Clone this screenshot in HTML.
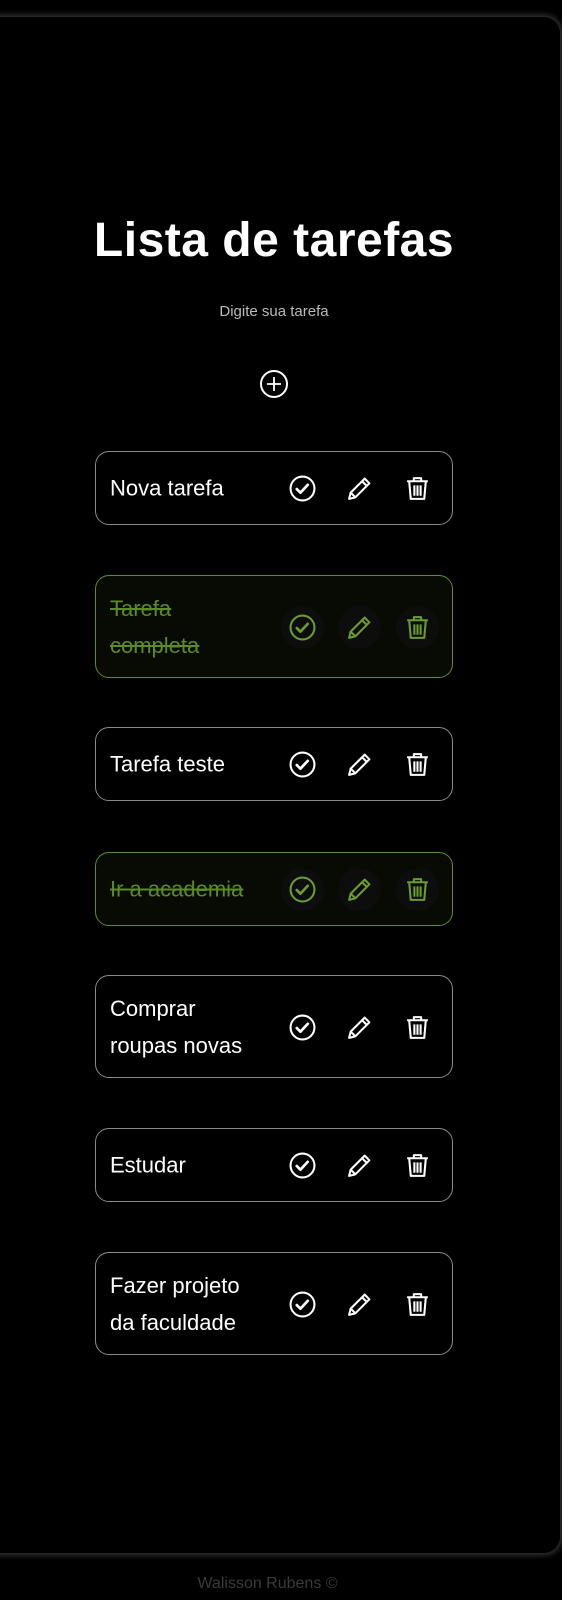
<!DOCTYPE html>
<html><head><meta charset="utf-8"><style>
*{margin:0;padding:0;box-sizing:border-box}
html,body{width:562px;height:1600px;background:#000;overflow:hidden;font-family:"Liberation Sans",sans-serif}
.main{position:absolute;left:-20px;top:17px;width:580px;height:1536px;background:#000;border-radius:16px;box-shadow:0 0 6px 2px rgba(90,90,90,.6)}
h1{position:absolute;top:213px;left:0;width:548px;text-align:center;color:#fff;font-size:48px;font-weight:bold;letter-spacing:0.5px}
.sub{position:absolute;top:303px;left:0;width:548px;text-align:center;color:#bbb;font-size:15px}
.plus{position:absolute;left:259px;top:369px}
.card{position:absolute;left:95px;width:358px;border:1px solid #8a8a8a;border-radius:14px;background:#000}
.card.done{border-color:#5e8d2b;background:#070b03}
.t{position:absolute;left:14px;top:50%;transform:translateY(-50%);width:150px;color:#fff;font-size:22px;line-height:37px}
.done .t{color:#5b8a26;text-decoration:line-through}
.ic{position:absolute;top:50%;width:43px;height:43px;margin-top:-21px;border-radius:50%;display:flex;align-items:center;justify-content:center}
.done .ic{background:#0d0d0d}
.i1{left:185px}.i2{left:242px}.i3{left:300px}
</style></head><body>
<div class="main"></div>
<h1>Lista de tarefas</h1>
<div class="sub">Digite sua tarefa</div>
<svg class="plus" width="30" height="30" viewBox="0 0 30 30"><circle cx="15" cy="15" r="13" fill="none" stroke="#fff" stroke-width="2"/><path d="M15 8v14M8 15h14" stroke="#fff" stroke-width="1.8"/></svg>

<svg width="0" height="0" style="position:absolute">
<defs>
<symbol id="chk" viewBox="0 0 26 26"><circle cx="13" cy="13" r="11.5" fill="none" stroke="currentColor" stroke-width="2"/><path d="M7.5 13.5l3.5 3.5 7-7.5" fill="none" stroke="currentColor" stroke-width="2.6" stroke-linecap="round" stroke-linejoin="round"/></symbol>
<symbol id="pen" viewBox="0 0 26 26"><path d="M18 3.5l4.5 4.5L9 21.5 3 23l1.5-6z M15.5 6l4.5 4.5 M4.5 17l4.5 4.5" fill="none" stroke="currentColor" stroke-width="2" stroke-linejoin="round"/></symbol>
<symbol id="trs" viewBox="0 0 26 26"><path d="M3 6h20 M9.5 6V3h7v3 M5 6l1.5 17h13L21 6 M10 10v10 M13 10v10 M16 10v10" fill="none" stroke="currentColor" stroke-width="2" stroke-linejoin="round"/></symbol>
</defs></svg>

<div class="card" style="top:451px;height:74px"><div class="t">Nova tarefa</div>
<div class="ic i1"><svg width="27" height="27" color="#fff"><use href="#chk"/></svg></div><div class="ic i2"><svg width="27" height="27" color="#fff"><use href="#pen"/></svg></div><div class="ic i3"><svg width="27" height="27" color="#fff"><use href="#trs"/></svg></div></div>

<div class="card done" style="top:575px;height:103px"><div class="t">Tarefa completa</div>
<div class="ic i1"><svg width="27" height="27" color="#6a9c30"><use href="#chk"/></svg></div><div class="ic i2"><svg width="27" height="27" color="#6a9c30"><use href="#pen"/></svg></div><div class="ic i3"><svg width="27" height="27" color="#6a9c30"><use href="#trs"/></svg></div></div>

<div class="card" style="top:727px;height:74px"><div class="t">Tarefa teste</div>
<div class="ic i1"><svg width="27" height="27" color="#fff"><use href="#chk"/></svg></div><div class="ic i2"><svg width="27" height="27" color="#fff"><use href="#pen"/></svg></div><div class="ic i3"><svg width="27" height="27" color="#fff"><use href="#trs"/></svg></div></div>

<div class="card done" style="top:852px;height:74px"><div class="t" style="width:175px">Ir a academia</div>
<div class="ic i1"><svg width="27" height="27" color="#6a9c30"><use href="#chk"/></svg></div><div class="ic i2"><svg width="27" height="27" color="#6a9c30"><use href="#pen"/></svg></div><div class="ic i3"><svg width="27" height="27" color="#6a9c30"><use href="#trs"/></svg></div></div>

<div class="card" style="top:975px;height:103px"><div class="t">Comprar roupas novas</div>
<div class="ic i1"><svg width="27" height="27" color="#fff"><use href="#chk"/></svg></div><div class="ic i2"><svg width="27" height="27" color="#fff"><use href="#pen"/></svg></div><div class="ic i3"><svg width="27" height="27" color="#fff"><use href="#trs"/></svg></div></div>

<div class="card" style="top:1128px;height:74px"><div class="t">Estudar</div>
<div class="ic i1"><svg width="27" height="27" color="#fff"><use href="#chk"/></svg></div><div class="ic i2"><svg width="27" height="27" color="#fff"><use href="#pen"/></svg></div><div class="ic i3"><svg width="27" height="27" color="#fff"><use href="#trs"/></svg></div></div>

<div class="card" style="top:1252px;height:103px"><div class="t">Fazer projeto da faculdade</div>
<div class="ic i1"><svg width="27" height="27" color="#fff"><use href="#chk"/></svg></div><div class="ic i2"><svg width="27" height="27" color="#fff"><use href="#pen"/></svg></div><div class="ic i3"><svg width="27" height="27" color="#fff"><use href="#trs"/></svg></div></div>

<div style="position:absolute;top:1575px;left:0;width:535px;text-align:center;color:#3a3a3a;font-size:16px">Walisson Rubens ©</div>
</body></html>
